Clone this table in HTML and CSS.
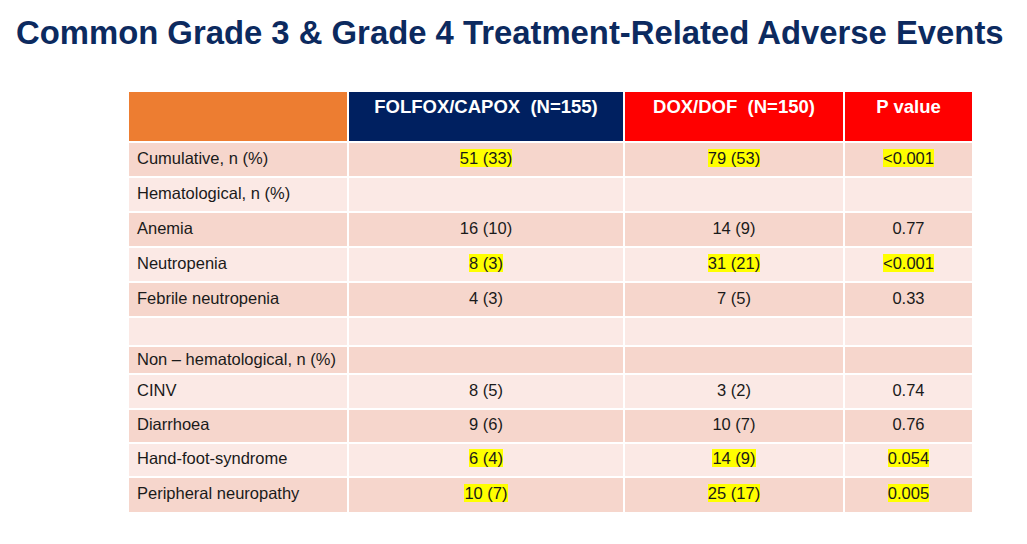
FILE: index.html
```html
<!DOCTYPE html>
<html>
<head>
<meta charset="utf-8">
<link rel="stylesheet" href="styles.css">
</head>
<body>
<h1 class="title">Common Grade 3 &amp; Grade 4 Treatment-Related Adverse Events</h1>
<table class="ae">
  <colgroup>
    <col class="c1"><col class="c2"><col class="c3"><col class="c4">
  </colgroup>
  <thead>
    <tr>
      <th class="h-orange"></th>
      <th class="h-navy">FOLFOX/CAPOX&nbsp; (N=155)</th>
      <th class="h-red">DOX/DOF&nbsp; (N=150)</th>
      <th class="h-red">P value</th>
    </tr>
  </thead>
  <tbody>
    <tr class="dark"><td>Cumulative, n (%)</td><td class="num"><span class="hl">51 (33)</span></td><td class="num"><span class="hl">79 (53)</span></td><td class="num"><span class="hl">&lt;0.001</span></td></tr>
    <tr class="light"><td>Hematological, n (%)</td><td></td><td></td><td></td></tr>
    <tr class="dark"><td>Anemia</td><td class="num">16 (10)</td><td class="num">14 (9)</td><td class="num">0.77</td></tr>
    <tr class="light"><td>Neutropenia</td><td class="num"><span class="hl">8 (3)</span></td><td class="num"><span class="hl">31 (21)</span></td><td class="num"><span class="hl">&lt;0.001</span></td></tr>
    <tr class="dark"><td>Febrile neutropenia</td><td class="num">4 (3)</td><td class="num">7 (5)</td><td class="num">0.33</td></tr>
    <tr class="light blank"><td></td><td></td><td></td><td></td></tr>
    <tr class="dark short"><td>Non – hematological, n (%)</td><td></td><td></td><td></td></tr>
    <tr class="light"><td>CINV</td><td class="num">8 (5)</td><td class="num">3 (2)</td><td class="num">0.74</td></tr>
    <tr class="dark tight"><td>Diarrhoea</td><td class="num">9 (6)</td><td class="num">10 (7)</td><td class="num">0.76</td></tr>
    <tr class="light tight"><td>Hand-foot-syndrome</td><td class="num"><span class="hl">6 (4)</span></td><td class="num"><span class="hl">14 (9)</span></td><td class="num"><span class="hl">0.054</span></td></tr>
    <tr class="dark tight last"><td>Peripheral neuropathy</td><td class="num"><span class="hl">10 (7)</span></td><td class="num"><span class="hl">25 (17)</span></td><td class="num"><span class="hl">0.005</span></td></tr>
  </tbody>
</table>
</body>
</html>
```

FILE: styles.css
```css
html, body {
  margin: 0;
  padding: 0;
  background: #ffffff;
}
body {
  font-family: "Liberation Sans", Arial, sans-serif;
  width: 1027px;
  height: 544px;
  overflow: hidden;
}
.title {
  margin: 0;
  padding: 14px 0 0 16px;
  height: 78px;
  box-sizing: border-box;
  font-size: 32.85px;
  line-height: 38px;
  font-weight: bold;
  color: #0c2a5f;
  white-space: nowrap;
}
.ae {
  margin-left: 129px;
  margin-top: 14px;
  border-collapse: separate;
  border-spacing: 0;
  table-layout: fixed;
  width: 843px;
}
.c1 { width: 220px; }
.c2 { width: 276px; }
.c3 { width: 220px; }
.c4 { width: 127px; }
.ae th, .ae td {
  border-right: 2px solid #ffffff;
  border-bottom: 2px solid #ffffff;
  padding: 0 8px;
  box-sizing: border-box;
}
.ae th:last-child, .ae td:last-child { border-right: 0; }
.ae th {
  height: 51px;
  vertical-align: top;
  padding-top: 4px;
  color: #ffffff;
  font-size: 18.5px;
  font-weight: bold;
  text-align: center;
  white-space: nowrap;
}
.h-orange { background: #ed7d31; }
.h-navy { background: #002060; }
.h-red { background: #ff0000; }
.ae td {
  height: 35px;
  font-size: 16.5px;
  color: #1a1a1a;
  vertical-align: middle;
  padding-bottom: 3px;
  white-space: nowrap;
}
.ae tr.blank td { height: 29px; }
.ae tr.short td { height: 28px; padding-bottom: 1px; }
.ae tr.tight td { height: 34px; }
.ae tr.last td { border-bottom: 0; }
.dark td { background: #f6d6cc; }
.light td { background: #fbe9e5; }
.num { text-align: center; }
.hl { background: #ffff00; }
```
